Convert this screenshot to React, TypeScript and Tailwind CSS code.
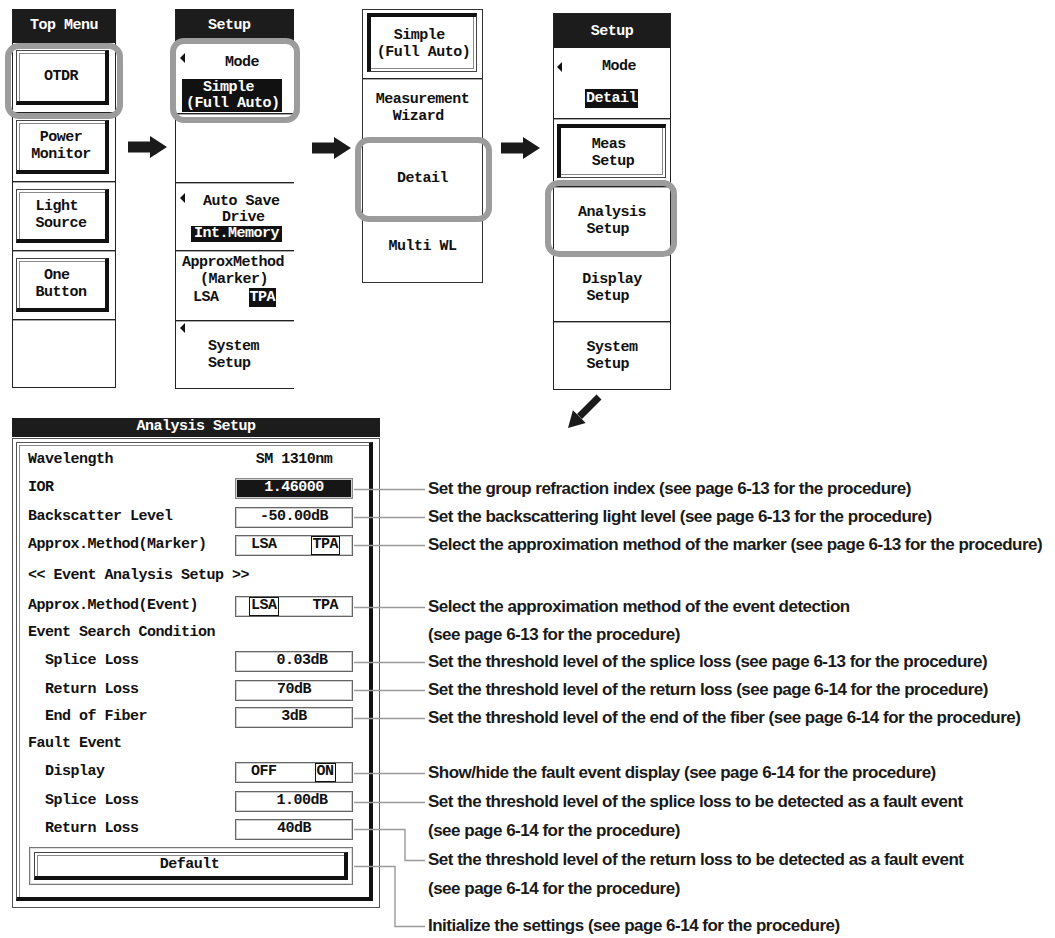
import React from "react";

const mono = "font-['Liberation_Mono','DejaVu_Sans_Mono',monospace] font-bold text-[15px] tracking-[-0.5px] text-[#111]";
const divider = "border-t border-t-[#222] shadow-[inset_0_1px_0_#a8a8a8]";
const ring = "absolute rounded-[14px] border-[6px] border-[#9c9c9c] pointer-events-none";

const Tri = ({ className }: { className: string }) => (
  <div className={`absolute w-0 h-0 border-y-[5px] border-y-transparent border-r-[5px] border-r-[#111] ${className}`} />
);

const Raised = ({ children, className = "" }: { children: React.ReactNode; className?: string }) => (
  <div
    className={`flex items-center justify-center text-center whitespace-pre leading-[17px] border border-[#444] border-r-[4px] border-b-[4px] border-r-[#111] border-b-[#111] shadow-[inset_2px_2px_0_#fff,inset_3px_3px_0_#8a8a8a] ${className}`}
  >
    {children}
  </div>
);

const Pressed = ({ children, className = "" }: { children: React.ReactNode; className?: string }) => (
  <div
    className={`flex items-center justify-center whitespace-pre leading-[17px] border border-[#444] border-l-[4px] border-t-[4px] border-l-[#111] border-t-[#111] shadow-[inset_-2px_-2px_0_#fff,inset_-3px_-3px_0_#8a8a8a] ${className}`}
  >
    {children}
  </div>
);

const Arrow = ({ className }: { className: string }) => (
  <svg width="39" height="22" viewBox="0 0 39 22" className={`shrink-0 ${className}`}>
    <rect x="0" y="5.5" width="23" height="11" fill="#1a1a1a" />
    <polygon points="22,0 39,11 22,22" fill="#1a1a1a" />
  </svg>
);

const TopMenu = () => (
  <div className="relative mt-[9px] ml-[12px] w-[104px] shrink-0 border-x border-b border-[#222]">
    <div className="h-[34px] bg-[#1c1c1c] text-white flex items-center justify-center">Top Menu</div>
    <div className="h-[69px] pl-[3px] pr-[6px] py-[7px]">
      <Raised className="h-full">OTDR</Raised>
    </div>
    <div className={`h-[69px] pl-[3px] pr-[6px] py-[7px] ${divider}`}>
      <Raised className="h-full">{"Power\nMonitor"}</Raised>
    </div>
    <div className={`h-[69px] pl-[3px] pr-[6px] py-[7px] ${divider}`}>
      <Raised className="h-full">{"Light\u00a0\nSource"}</Raised>
    </div>
    <div className={`h-[69px] pl-[3px] pr-[6px] py-[7px] ${divider}`}>
      <Raised className="h-full">{"One\u00a0\nButton"}</Raised>
    </div>
    <div className={`h-[68px] ${divider}`} />
    <div className={`${ring} left-[-8px] top-[34px] w-[118px] h-[76px]`} />
  </div>
);

const SetupA = () => (
  <div className="relative mt-[9px] ml-[8px] w-[119px] shrink-0 border-l border-b border-[#222] leading-[16px]">
    <div className="h-[34px] bg-[#1c1c1c] text-white flex items-center pl-[32px]">Setup</div>
    <div className="relative h-[70px] pt-[12px]">
      <Tri className="left-[4px] top-[10px]" />
      <div className="pl-[49px]">Mode</div>
      <div className="ml-[6px] mt-[8px] w-[100px] h-[33px] bg-[#111] text-white whitespace-pre pl-[4px] pt-[1px]">
        {"  Simple\n(Full Auto)"}
      </div>
    </div>
    <div className={`h-[69px] ${divider}`} />
    <div className={`relative h-[68px] pt-[11px] ${divider}`}>
      <Tri className="left-[4px] top-[10px]" />
      <div className="pl-[27px]">Auto Save</div>
      <div className="pl-[46px]">Drive</div>
      <div className="ml-[15px] w-fit bg-[#111] text-white px-[3px]">Int.Memory</div>
    </div>
    <div className={`h-[70px] pt-[3px] leading-[17px] ${divider}`}>
      <div className="pl-[6px]">ApproxMethod</div>
      <div className="pl-[24px]">(Marker)</div>
      <div className="flex items-center h-[19px] pl-[17px]">
        <span>LSA</span>
        <span className="ml-[30px] h-full flex items-center bg-[#111] text-white px-[1px]">TPA</span>
      </div>
    </div>
    <div className={`relative h-[68px] flex items-center pl-[32px] ${divider}`}>
      <Tri className="left-[4px] top-[2px]" />
      <div className="whitespace-pre leading-[17px]">{"System\nSetup"}</div>
    </div>
    <div className={`${ring} left-[-6px] top-[29px] w-[130px] h-[85px]`} />
  </div>
);

const ModeMenu = () => (
  <div className="relative mt-[9px] ml-[11px] w-[121px] h-[274px] shrink-0 border border-[#333]">
    <div className="h-[68px] pl-[4px] pr-[5px] pt-[3px] pb-[6px]">
      <Pressed className="h-full">{"  Simple\n(Full Auto)"}</Pressed>
    </div>
    <div className={`flex flex-col items-center pt-[12px] leading-[17px] ${divider}`}>
      <div className="whitespace-pre">{"Measurement\n  Wizard"}</div>
      <div className="mt-[45px]">Detail</div>
      <div className="mt-[51px]">Multi WL</div>
    </div>
    <div className={`${ring} left-[-8px] top-[127px] w-[137px] h-[85px]`} />
  </div>
);

const SetupB = () => (
  <div className="relative mt-[13px] ml-[13px] w-[118px] shrink-0 border border-[#222] leading-[17px]">
    <div className="h-[34px] bg-[#1c1c1c] text-white flex items-center justify-center">Setup</div>
    <div className="relative h-[70px] pt-[11px] leading-[16px]">
      <Tri className="left-[3px] top-[14px]" />
      <div className="pl-[48px]">Mode</div>
      <div className="ml-[31px] mt-[14px] w-fit h-[19px] flex items-center bg-[#111] text-white px-[1px]">Detail</div>
    </div>
    <div className={`h-[68px] pl-[3px] pr-[4px] pt-[5px] pb-[8px] ${divider}`}>
      <Pressed className="h-full">{"Meas\u00a0\nSetup"}</Pressed>
    </div>
    <div className={`h-[68px] flex items-center justify-center text-center whitespace-pre ${divider}`}>
      {"Analysis\nSetup\u00a0"}
    </div>
    <div className={`h-[67px] flex items-center justify-center text-center whitespace-pre ${divider}`}>
      {"Display\nSetup\u00a0"}
    </div>
    <div className={`h-[68px] flex items-center justify-center text-center whitespace-pre ${divider}`}>
      {"System\nSetup\u00a0"}
    </div>
    <div className={`${ring} left-[-9px] top-[166px] w-[132px] h-[77px]`} />
  </div>
);

const valueBox = "h-[21px] w-[118px] flex items-center border border-[#666] shadow-[inset_0_0_0_1px_#cfcfcf]";

const Row = ({ label, h, children }: { label: string; h: string; children?: React.ReactNode }) => (
  <div className={`flex items-center pl-[11px] ${h}`}>
    <div className="w-[207px] shrink-0 whitespace-pre">{label}</div>
    {children}
  </div>
);

const Val = ({ children, className = "justify-center" }: { children: React.ReactNode; className?: string }) => (
  <div className={`${valueBox} ${className}`}>{children}</div>
);

const Toggle = ({ a, b, sel, gap }: { a: string; b: string; sel: 0 | 1; gap: string }) => (
  <div className={`${valueBox} pl-[13px]`}>
    <span className={`h-full flex items-center px-[1px] border ${sel === 0 ? "border-[#111]" : "border-transparent"}`}>{a}</span>
    <span className={`h-full flex items-center px-[1px] border ${gap} ${sel === 1 ? "border-[#111]" : "border-transparent"}`}>{b}</span>
  </div>
);

const AnalysisPanel = () => (
  <div className={`ml-[12px] w-[368px] shrink-0 ${mono}`}>
    <div className="h-[19px] bg-[#1c1c1c] text-white flex items-center justify-center">Analysis Setup</div>
    <div className="mt-[1px] h-[470px] border border-[#555] pl-[3px] pr-[6px] pt-[3px] pb-[5px]">
      <div className="h-[459px] border border-[#555] border-r-[4px] border-b-[4px] border-r-[#111] border-b-[#111] shadow-[inset_2px_2px_0_#fff,inset_3px_3px_0_#8a8a8a] pt-[3px]">
        <Row label="Wavelength" h="h-[28px]">
          <div className="w-[118px] text-center">SM 1310nm</div>
        </Row>
        <Row label="IOR" h="h-[29px]">
          <div className={`${valueBox} justify-center bg-[#161616] text-white border-[#888] shadow-[inset_0_0_0_1px_#555]`}>1.46000</div>
        </Row>
        <Row label="Backscatter Level" h="h-[28px]">
          <Val>-50.00dB</Val>
        </Row>
        <Row label="Approx.Method(Marker)" h="h-[29px]">
          <Toggle a="LSA" b="TPA" sel={1} gap="ml-[32px]" />
        </Row>
        <Row label="<< Event Analysis Setup >>" h="h-[32px]" />
        <Row label="Approx.Method(Event)" h="h-[28px]">
          <Toggle a="LSA" b="TPA" sel={0} gap="ml-[32px]" />
        </Row>
        <Row label="Event Search Condition" h="h-[26px]" />
        <Row label="  Splice Loss" h="h-[30px]">
          <Val className="justify-center pl-[16px]">0.03dB</Val>
        </Row>
        <Row label="  Return Loss" h="h-[28px]">
          <Val>70dB</Val>
        </Row>
        <Row label="  End of Fiber" h="h-[27px]">
          <Val>3dB</Val>
        </Row>
        <Row label="Fault Event" h="h-[27px]" />
        <Row label="  Display" h="h-[29px]">
          <Toggle a="OFF" b="ON" sel={1} gap="ml-[36px]" />
        </Row>
        <Row label="  Splice Loss" h="h-[29px]">
          <Val className="justify-center pl-[16px]">1.00dB</Val>
        </Row>
        <Row label="  Return Loss" h="h-[27px]">
          <Val>40dB</Val>
        </Row>
        <div className="ml-[12px] mt-[4px] w-[324px] h-[38px] border border-[#777] shadow-[inset_0_0_0_1px_#ddd] p-[4px]">
          <Raised className="h-full">Default</Raised>
        </div>
      </div>
    </div>
  </div>
);

const Connectors = () => (
  <svg width="80" height="520" className="absolute left-[354px] top-0" fill="none" stroke="#9a9a9a" strokeWidth="1.4">
    <path d="M0 71.5H71" />
    <path d="M0 99.5H71" />
    <path d="M0 127.5H71" />
    <path d="M0 189.5H71" />
    <path d="M0 244.5H71" />
    <path d="M0 272.5H71" />
    <path d="M0 300.5H71" />
    <path d="M0 355.5H71" />
    <path d="M0 384.5H71" />
    <path d="M0 411.5H51V442.5H71" />
    <path d="M0 448.5H41V508.5H71" />
  </svg>
);

const Descriptions = () => (
  <div className="ml-[48px] font-['Liberation_Sans',Arial,sans-serif] font-bold text-[17px] tracking-[-0.5px] leading-[20px] text-[#1a1a1a] whitespace-nowrap">
    <div className="mt-[61px]">Set the group refraction index (see page 6-13 for the procedure)</div>
    <div className="mt-[8px]">Set the backscattering light level (see page 6-13 for the procedure)</div>
    <div className="mt-[8px]">Select the approximation method of the marker (see page 6-13 for the procedure)</div>
    <div className="mt-[42px]">Select the approximation method of the event detection</div>
    <div className="mt-[8px]">(see page 6-13 for the procedure)</div>
    <div className="mt-[7px]">Set the threshold level of the splice loss (see page 6-13 for the procedure)</div>
    <div className="mt-[8px]">Set the threshold level of the return loss (see page 6-14 for the procedure)</div>
    <div className="mt-[8px]">Set the threshold level of the end of the fiber (see page 6-14 for the procedure)</div>
    <div className="mt-[35px]">Show/hide the fault event display (see page 6-14 for the procedure)</div>
    <div className="mt-[9px]">Set the threshold level of the splice loss to be detected as a fault event</div>
    <div className="mt-[9px]">(see page 6-14 for the procedure)</div>
    <div className="mt-[9px]">Set the threshold level of the return loss to be detected as a fault event</div>
    <div className="mt-[9px]">(see page 6-14 for the procedure)</div>
    <div className="mt-[17px]">Initialize the settings (see page 6-14 for the procedure)</div>
  </div>
);

export default function App() {
  return (
    <div className="w-[1055px] h-[938px] bg-white overflow-hidden">
      <div className={`flex items-start h-[389px] ${mono}`}>
        <TopMenu />
        <Arrow className="ml-[12px] mt-[136px]" />
        <SetupA />
        <Arrow className="ml-[18px] mt-[137px]" />
        <ModeMenu />
        <Arrow className="ml-[18px] mt-[137px]" />
        <SetupB />
      </div>
      {/* padding, not svg margin: a block svg's margin would collapse out of this strip */}
      <div className="h-[29px] pl-[567px] pt-[6px]">
        <svg width="36" height="34" viewBox="0 0 36 34" className="overflow-visible">
          <line x1="12.5" y1="21.5" x2="32" y2="2" stroke="#1a1a1a" strokeWidth="7" />
          <polygon points="1,33 5.9,15.3 18.7,28.1" fill="#1a1a1a" />
        </svg>
      </div>
      <div className="relative flex items-start">
        <AnalysisPanel />
        <Descriptions />
        <Connectors />
      </div>
    </div>
  );
}
